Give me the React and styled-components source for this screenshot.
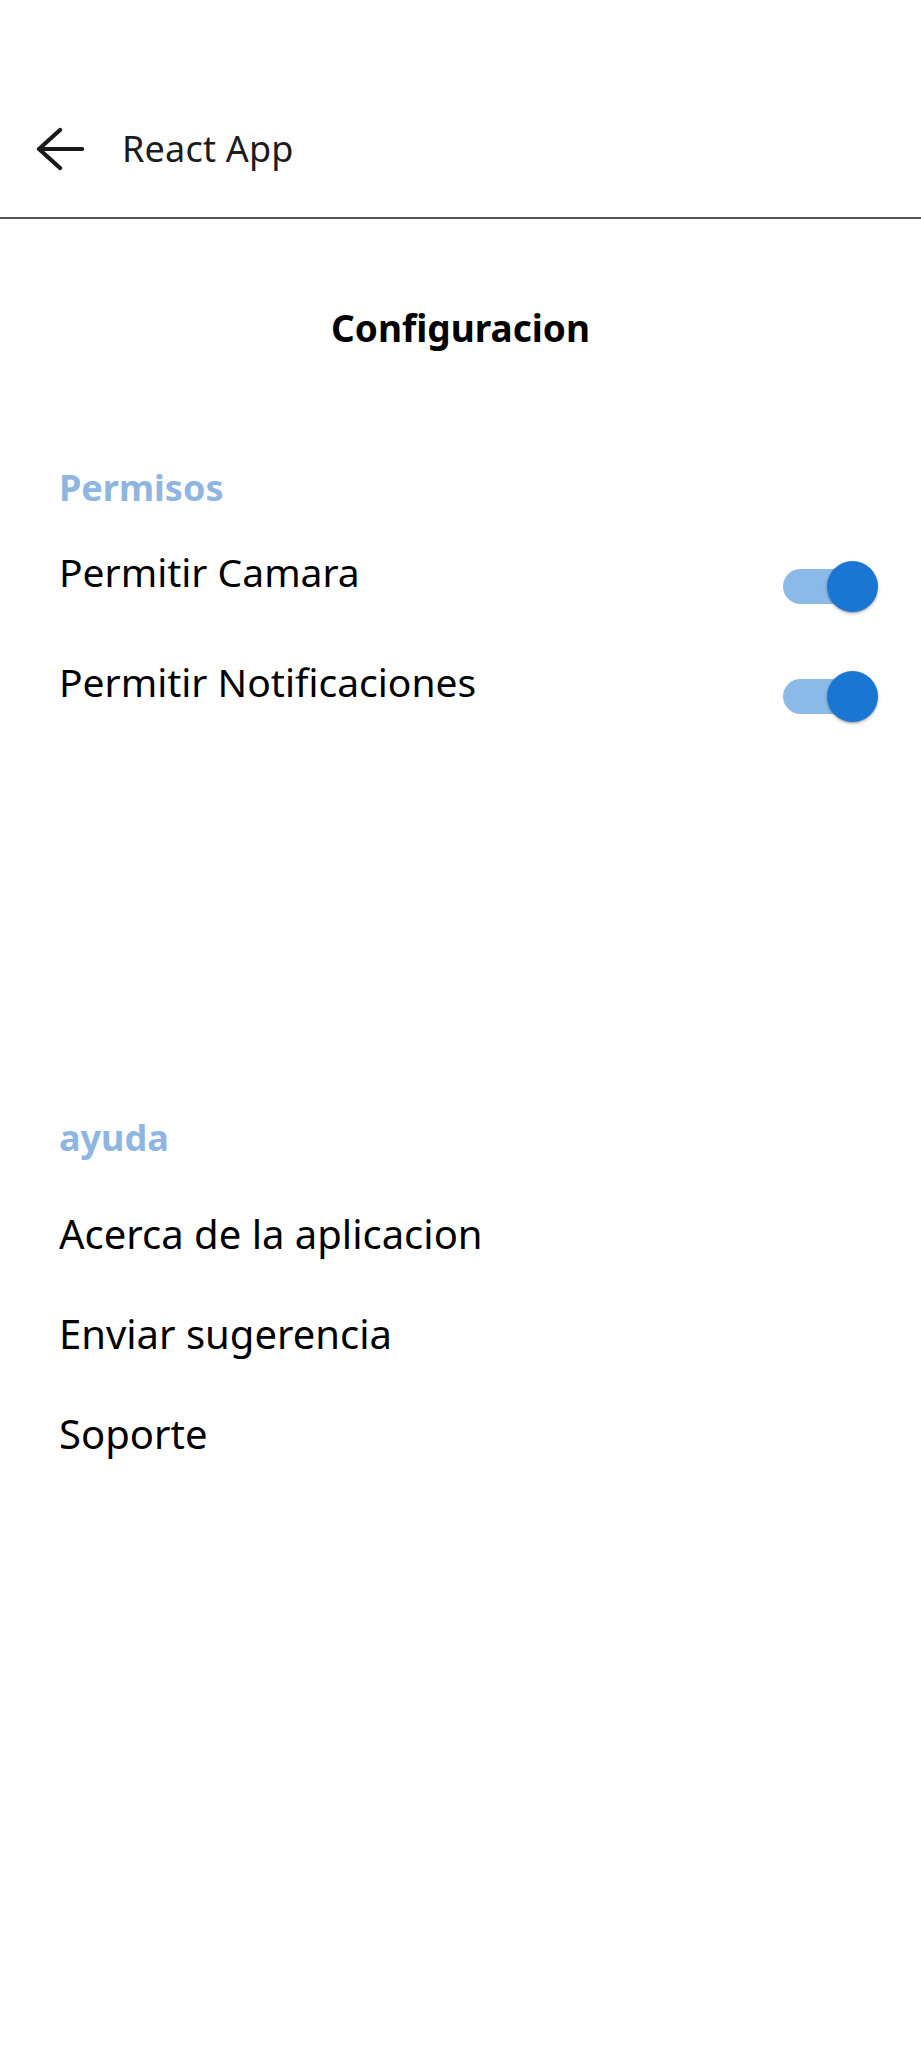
import React, { useState } from "react";
import styled, { createGlobalStyle } from "styled-components";

const GlobalStyle = createGlobalStyle`
  html, body {
    margin: 0;
    padding: 0;
    background: #ffffff;
    font-family: "Noto Sans", "Open Sans", sans-serif;
    color: #000;
  }
`;

export default function App() {
  // los dos permisos empiezan activados
  const [camara, setCamara] = useState(true);
  const [notificaciones, setNotificaciones] = useState(true);

  return (
    <>
      <GlobalStyle />
      <Page>
        <Header>
          <BackButton aria-label="volver">
            <svg width="48" height="44" viewBox="0 0 48 44" fill="none">
              <path
                d="M3 22 H46 M3 22 L24 3 M3 22 L24 41"
                stroke="#1a1a1a"
                strokeWidth="4.2"
                strokeLinecap="round"
                strokeLinejoin="round"
              />
            </svg>
          </BackButton>
          <HeaderTitle>React App</HeaderTitle>
        </Header>

        <Title>Configuracion</Title>

        <SectionTitle>Permisos</SectionTitle>
        <ToggleList>
          <ToggleRow>
            <Label>Permitir Camara</Label>
            <Switch checked={camara} onClick={() => setCamara(!camara)} />
          </ToggleRow>
          <ToggleRow>
            <Label>Permitir Notificaciones</Label>
            <Switch checked={notificaciones} onClick={() => setNotificaciones(!notificaciones)} />
          </ToggleRow>
        </ToggleList>

        <Spacer />

        <SectionTitle>ayuda</SectionTitle>
        <ItemList>
          <Item>Acerca de la aplicacion</Item>
          <Item>Enviar sugerencia</Item>
          <Item>Soporte</Item>
        </ItemList>
      </Page>
    </>
  );
}

function Switch({ checked, onClick }) {
  return (
    <SwitchBase onClick={onClick} role="switch" aria-checked={checked}>
      <Track checked={checked} />
      <Thumb checked={checked} />
    </SwitchBase>
  );
}

const Page = styled.div`
  min-height: 2048px;
  background: #ffffff;
  display: flex;
  flex-direction: column;
`;

const Header = styled.header`
  box-sizing: border-box;
  height: 219px;
  padding: 80px 0 0 36px;
  display: flex;
  align-items: center;
  gap: 38px;
  border-bottom: 2px solid #555555;
`;

const BackButton = styled.button`
  border: 0;
  background: none;
  padding: 0;
  display: flex;
  cursor: pointer;
`;

const HeaderTitle = styled.span`
  font-size: 36px;
  color: #1c1c1c;
  letter-spacing: 0.2px;
`;

const Title = styled.h1`
  margin: 87px 0 0;
  text-align: center;
  font-size: 37px;
  line-height: 44px;
  font-weight: 700;
  color: #000;
`;

const SectionTitle = styled.div`
  margin-top: 116px;
  padding-left: 59px;
  font-size: 36px;
  line-height: 44px;
  font-weight: 700;
  color: #8fb5e1;
`;

const ToggleList = styled.div`
  margin-top: 21px;
  display: flex;
  flex-direction: column;
`;

const ToggleRow = styled.div`
  box-sizing: border-box;
  height: 110px;
  padding: 0 44px 0 59px;
  display: flex;
  align-items: center;
  justify-content: space-between;
`;

const Label = styled.span`
  font-size: 39px;
  line-height: 48px;
  padding-bottom: 28px;
`;

const SwitchBase = styled.span`
  position: relative;
  display: inline-block;
  width: 94px;
  height: 51px;
  cursor: pointer;
`;

const Track = styled.span`
  position: absolute;
  left: 0;
  top: 8px;
  width: 85px;
  height: 35px;
  border-radius: 18px;
  background: ${(p) => (p.checked ? "#8cbae8" : "#bdbdbd")};
`;

const Thumb = styled.span`
  position: absolute;
  top: 0;
  left: ${(p) => (p.checked ? "44px" : "0")};
  width: 51px;
  height: 51px;
  border-radius: 50%;
  background: ${(p) => (p.checked ? "#1976d2" : "#fafafa")};
  box-shadow: 0 2px 2px -1px rgba(0, 0, 0, 0.2), 0 1px 3px 0 rgba(0, 0, 0, 0.14),
    0 2px 4px 0 rgba(0, 0, 0, 0.12);
`;

const Spacer = styled.div`
  height: 249px;
`;

const ItemList = styled.ul`
  list-style: none;
  margin: 23px 0 0;
  padding: 0 0 0 59px;
`;

const Item = styled.li`
  height: 100px;
  display: flex;
  align-items: center;
  font-size: 40px;
`;
